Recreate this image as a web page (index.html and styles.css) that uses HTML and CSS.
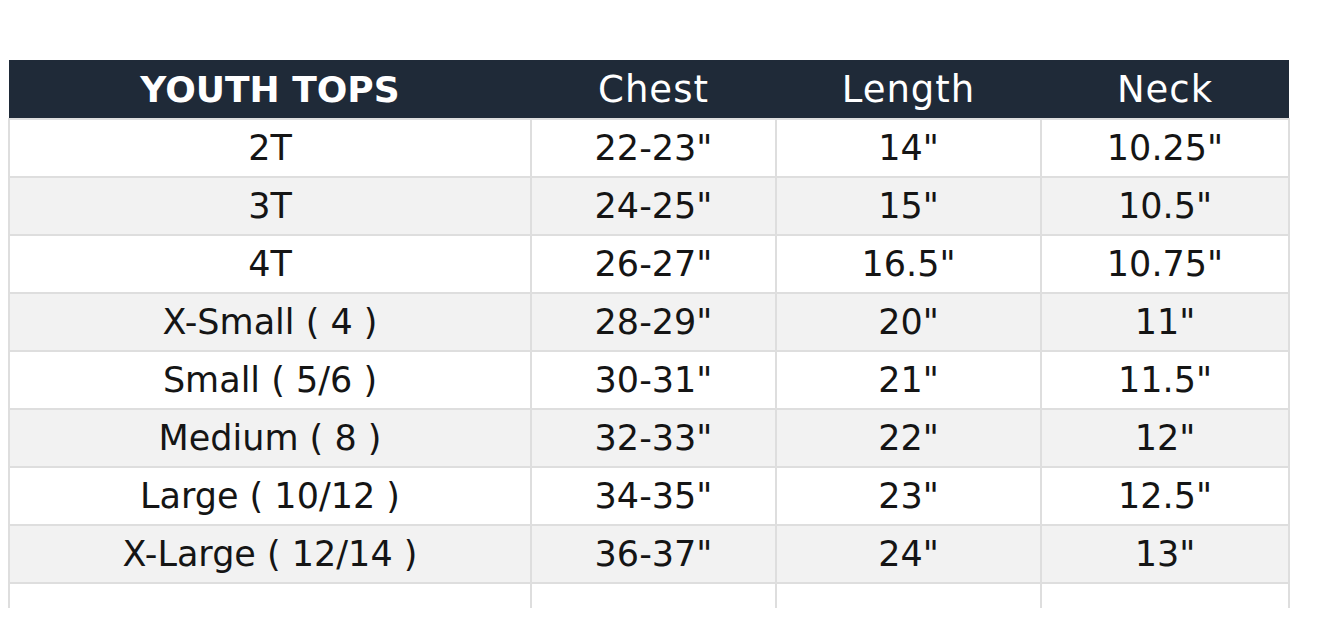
FILE: index.html
```html
<!DOCTYPE html>
<html>
<head>
<meta charset="utf-8">
<link rel="stylesheet" href="styles.css">
</head>
<body>
<div class="wrap">
<table class="chart">
<colgroup>
<col class="c1"><col class="c2"><col class="c3"><col class="c4">
</colgroup>
<thead>
<tr><th class="title">YOUTH TOPS</th><th>Chest</th><th>Length</th><th>Neck</th></tr>
</thead>
<tbody>
<tr><td>2T</td><td>22-23"</td><td>14"</td><td>10.25"</td></tr>
<tr class="alt"><td>3T</td><td>24-25"</td><td>15"</td><td>10.5"</td></tr>
<tr><td>4T</td><td>26-27"</td><td>16.5"</td><td>10.75"</td></tr>
<tr class="alt"><td>X-Small ( 4 )</td><td>28-29"</td><td>20"</td><td>11"</td></tr>
<tr><td>Small ( 5/6 )</td><td>30-31"</td><td>21"</td><td>11.5"</td></tr>
<tr class="alt"><td>Medium ( 8 )</td><td>32-33"</td><td>22"</td><td>12"</td></tr>
<tr><td>Large ( 10/12 )</td><td>34-35"</td><td>23"</td><td>12.5"</td></tr>
<tr class="alt"><td>X-Large ( 12/14 )</td><td>36-37"</td><td>24"</td><td>13"</td></tr>
<tr class="empty"><td></td><td></td><td></td><td></td></tr>
</tbody>
</table>
</div>
</body>
</html>
```
FILE: styles.css
```css
html, body {
  margin: 0;
  padding: 0;
  background: #ffffff;
}
.wrap {
  padding: 60px 0 0 8px;
}
.chart {
  width: 1280px;
  border-collapse: collapse;
  table-layout: fixed;
  font-family: "DejaVu Sans", sans-serif;
  color: #151515;
}
.c1 { width: 522px; }
.c2 { width: 245px; }
.c3 { width: 265px; }
.c4 { width: 248px; }
.chart th {
  background: #1f2a38;
  color: #ffffff;
  font-weight: normal;
  font-size: 37px;
  letter-spacing: 1px;
  height: 58px;
  padding: 0;
  text-align: center;
  border: none;
}
.chart th.title {
  font-weight: bold;
  font-size: 36px;
  letter-spacing: 0;
}
.chart td {
  border: 2px solid #dedede;
  height: 56px;
  padding: 0;
  text-align: center;
  font-size: 35px;
}
.chart tr.alt td {
  background: #f2f2f2;
}
.chart tr.empty td {
  height: 24px;
  border-bottom: none;
}
```
